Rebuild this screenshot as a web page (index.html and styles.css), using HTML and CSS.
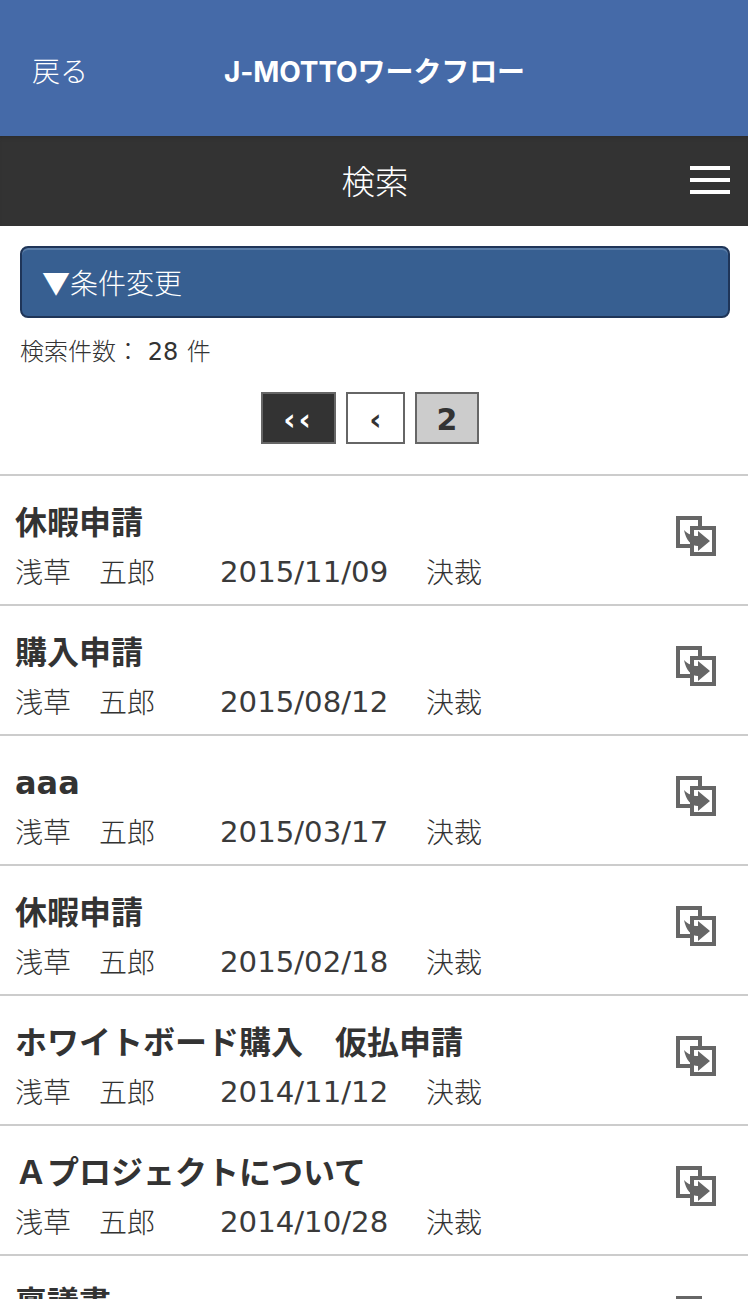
FILE: index.html
```html
<!DOCTYPE html>
<html lang="ja">
<head>
<meta charset="utf-8">
<title>検索</title>
<link rel="stylesheet" href="styles.css">
</head>
<body>
<svg class="defs" width="0" height="0">
  <symbol id="ico" viewBox="0 0 40 40">
    <path class="ico-s" d="M14 30H2V2H24V10"/>
    <rect class="ico-s" x="16" y="12" width="22" height="26"/>
    <path class="ico-f" d="M8 14C12 18 16 20 22 20V15L34 25L22 35V30C15 30 10 24 8 14Z"/>
  </symbol>
</svg>
<header class="top">
  <a class="back">戻る</a>
  <h1 class="app">J-MOTTOワークフロー</h1>
</header>
<div class="sub">
  <h2 class="sub-title">検索</h2>
  <div class="burger"><i></i><i></i><i></i></div>
</div>
<main class="search">
  <button class="toggle"><span class="tri">▼</span>条件変更</button>
  <p class="count"><span class="jp">検索件数：</span> 28 <span class="jp unit">件</span></p>
  <nav class="pager">
    <a class="pg pg-first">‹‹</a>
    <a class="pg pg-prev">‹</a>
    <a class="pg pg-cur">2</a>
  </nav>
</main>
<ul class="list">
  <li class="row"><div class="info"><h3 class="ttl">休暇申請</h3><p class="meta"><span class="who">浅草　五郎</span><span class="date">2015/11/09</span><span class="st">決裁</span></p></div><svg class="ico"><use href="#ico"/></svg></li>
  <li class="row"><div class="info"><h3 class="ttl">購入申請</h3><p class="meta"><span class="who">浅草　五郎</span><span class="date">2015/08/12</span><span class="st">決裁</span></p></div><svg class="ico"><use href="#ico"/></svg></li>
  <li class="row"><div class="info"><h3 class="ttl">aaa</h3><p class="meta"><span class="who">浅草　五郎</span><span class="date">2015/03/17</span><span class="st">決裁</span></p></div><svg class="ico"><use href="#ico"/></svg></li>
  <li class="row"><div class="info"><h3 class="ttl">休暇申請</h3><p class="meta"><span class="who">浅草　五郎</span><span class="date">2015/02/18</span><span class="st">決裁</span></p></div><svg class="ico"><use href="#ico"/></svg></li>
  <li class="row"><div class="info"><h3 class="ttl">ホワイトボード購入　仮払申請</h3><p class="meta"><span class="who">浅草　五郎</span><span class="date">2014/11/12</span><span class="st">決裁</span></p></div><svg class="ico"><use href="#ico"/></svg></li>
  <li class="row"><div class="info"><h3 class="ttl">Ａプロジェクトについて</h3><p class="meta"><span class="who">浅草　五郎</span><span class="date">2014/10/28</span><span class="st">決裁</span></p></div><svg class="ico"><use href="#ico"/></svg></li>
  <li class="row"><div class="info"><h3 class="ttl">稟議書</h3><p class="meta"><span class="who">浅草　五郎</span><span class="date">2014/10/28</span><span class="st">決裁</span></p></div><svg class="ico"><use href="#ico"/></svg></li>
</ul>
</body>
</html>
```
FILE: styles.css
```css
* { box-sizing: border-box; }
html, body { margin: 0; padding: 0; height: 1299px; overflow: hidden; }
body {
  background: #fff;
  color: #333;
  font-family: "DejaVu Sans", "Noto Sans CJK JP", sans-serif;
}
.defs { display: block; height: 0; }
.top {
  height: 136px;
  background: #456aa8;
  color: #fff;
  display: flex;
  align-items: center;
  justify-content: center;
  position: relative;
}
.back {
  position: absolute;
  left: 32px;
  top: 49px;
  font-size: 28px;
  line-height: 42px;
  font-family: "Noto Sans CJK JP", sans-serif;
  font-weight: 300;
}
.app {
  margin: 0;
  font-family: "Inter", "Noto Sans CJK JP", sans-serif;
  font-size: 28px;
  line-height: 42px;
  font-weight: 700;
  padding: 8px 0 0 1px;
  letter-spacing: -0.1px;
}
.sub {
  height: 90px;
  background: #333;
  color: #fff;
  display: flex;
  align-items: center;
  justify-content: center;
  position: relative;
  box-shadow: inset 0 4px 4px -3px #2a2a2a;
}
.sub-title {
  margin: 0 0 2px 2px;
  font-family: "Noto Sans CJK JP", sans-serif;
  font-size: 33.5px;
  font-weight: 300;
  line-height: 46px;
}
.burger {
  position: absolute;
  right: 18px;
  top: 30px;
  width: 40px;
  display: flex;
  flex-direction: column;
  gap: 8px;
}
.burger i { display: block; height: 4px; background: #fff; }
.search { padding: 20px 18px 0 20px; }
.toggle {
  display: block;
  width: 710px;
  height: 72px;
  padding: 6px 0 0 20px;
  text-align: left;
  background: #375f91;
  border: 2px solid #1f3558;
  border-radius: 8px;
  box-shadow: inset 0 2px 0 #5a7da8;
  color: #fff;
  font-family: "DejaVu Sans", "Noto Sans CJK JP", sans-serif;
  font-size: 28px;
  line-height: 62px;
  font-weight: 300;
}
.tri { display: inline-block; width: 28px; }
.count {
  margin: 14px 0 0;
  font-size: 24px;
  line-height: 36px;
}
.jp { font-family: "Noto Sans CJK JP", sans-serif; font-weight: 300; }
.unit { margin-left: 1px; }
.pager {
  margin-top: 22px;
  display: flex;
  justify-content: center;
  gap: 10px;
  padding-right: 10px;
}
.pg {
  height: 52px;
  border: 2px solid #666;
  display: flex;
  align-items: center;
  justify-content: center;
  font-weight: 700;
  padding-top: 3px;
}
.pg-first { width: 75px; background: #333; color: #fff; font-size: 30px; letter-spacing: 3px; }
.pg-prev { width: 59px; background: #fff; color: #333; font-size: 30px; }
.pg-cur { width: 64px; background: #ccc; color: #333; font-size: 30px; }
.list {
  list-style: none;
  margin: 30px 0 0;
  padding: 0;
  border-top: 2px solid #ccc;
}
.row {
  height: 130px;
  border-bottom: 2px solid #ccc;
  padding: 0 32px 0 15px;
  display: flex;
  justify-content: space-between;
  align-items: flex-start;
}
.ttl {
  margin: 27px 0 0;
  font-size: 32px;
  line-height: 40px;
  font-weight: 700;
  color: #333;
}
.meta {
  margin: 8px 0 0;
  font-size: 28px;
  line-height: 40px;
  display: flex;
}
.who { width: 205px; font-family: "Noto Sans CJK JP", sans-serif; font-weight: 300; }
.date { width: 206px; font-size: 29.2px; padding-top: 1px; color: #3a3a3a; }
.st { font-family: "Noto Sans CJK JP", sans-serif; font-weight: 300; }
.ico { width: 40px; height: 40px; margin-top: 40px; flex: none; }
.ico-s { fill: none; stroke: #666; stroke-width: 4; }
.ico-f { fill: #666; }
```
